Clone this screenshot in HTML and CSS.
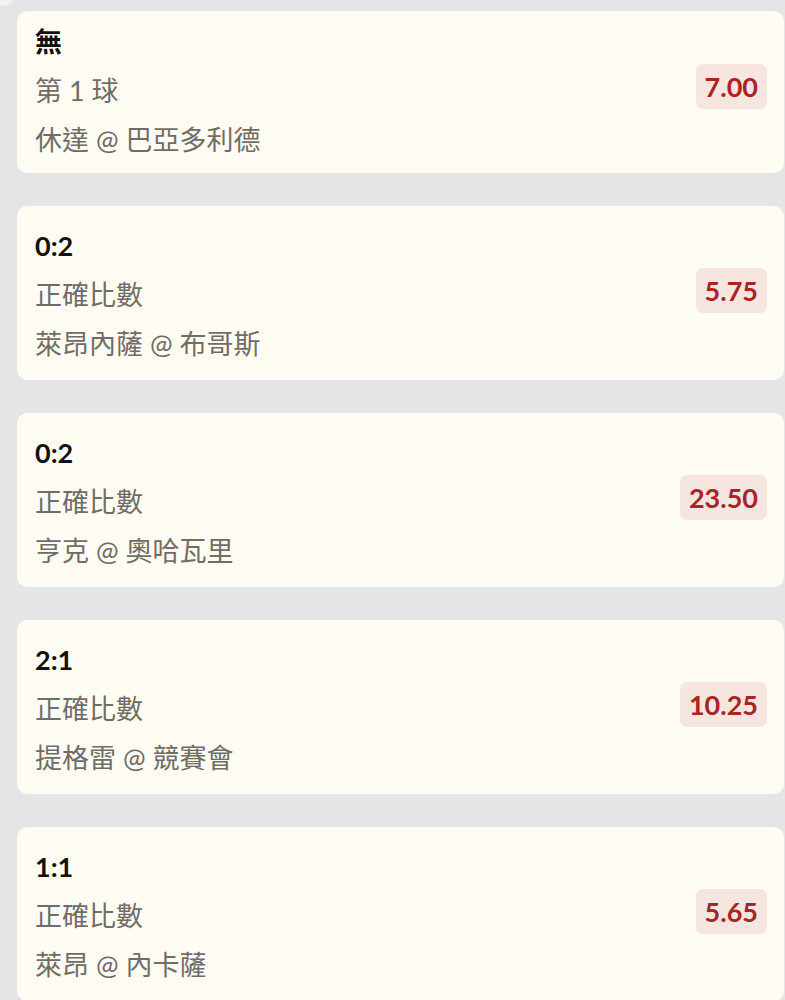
FILE: index.html
```html
<!DOCTYPE html>
<html lang="zh-Hant">
<head>
<meta charset="utf-8">
<title>投注項目</title>
<link rel="stylesheet" href="styles.css">
</head>
<body>
<div class="corner-blob"></div>
<main class="list">
  <div class="card card-first">
    <div class="info">
      <div class="title">無</div>
      <div class="line">第 1 球</div>
      <div class="line">休達 @ 巴亞多利德</div>
    </div>
    <div class="odds">7.00</div>
  </div>
  <div class="card">
    <div class="info">
      <div class="title">0:2</div>
      <div class="line">正確比數</div>
      <div class="line">萊昂內薩 @ 布哥斯</div>
    </div>
    <div class="odds">5.75</div>
  </div>
  <div class="card">
    <div class="info">
      <div class="title">0:2</div>
      <div class="line">正確比數</div>
      <div class="line">亨克 @ 奧哈瓦里</div>
    </div>
    <div class="odds">23.50</div>
  </div>
  <div class="card">
    <div class="info">
      <div class="title">2:1</div>
      <div class="line">正確比數</div>
      <div class="line">提格雷 @ 競賽會</div>
    </div>
    <div class="odds">10.25</div>
  </div>
  <div class="card">
    <div class="info">
      <div class="title">1:1</div>
      <div class="line">正確比數</div>
      <div class="line">萊昂 @ 內卡薩</div>
    </div>
    <div class="odds">5.65</div>
  </div>
</main>
</body>
</html>
```

FILE: styles.css
```css
html, body {
  margin: 0;
  padding: 0;
  background: #e4e5e7;
}
body {
  font-family: "Lato", "Noto Sans CJK TC", sans-serif;
  position: relative;
  overflow: hidden;
  height: 1000px;
}
.corner-blob {
  position: absolute;
  left: -12px;
  top: -22px;
  width: 28px;
  height: 28px;
  border-radius: 50%;
  background: #f3f3f2;
}
.list {
  display: flex;
  flex-direction: column;
  gap: 33px;
  padding: 11px 1px 0 17px;
}
.card {
  background: #fffcf3;
  border-radius: 10px;
  display: flex;
  align-items: center;
  justify-content: space-between;
  padding: 15px 17px 12px 18px;
}
.card-first {
  padding-top: 6px;
  padding-bottom: 9px;
}
.info {
  display: flex;
  flex-direction: column;
}
.title {
  font-size: 27px;
  line-height: 49px;
  font-weight: 700;
  color: #111111;
}
.line {
  font-size: 27px;
  line-height: 49px;
  color: #706c66;
}
.odds {
  background: #f7e5df;
  color: #a8261f;
  font-size: 27px;
  font-weight: 700;
  line-height: 35px;
  padding: 5px 9px;
  border-radius: 7px;
  margin-top: -8px;
}
```
